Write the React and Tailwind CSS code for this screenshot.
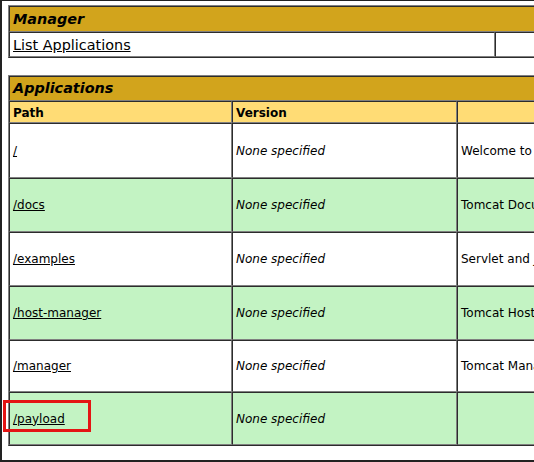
import React from "react";

const cell = "border border-[#808080] [border-style:inset] px-[3px] align-middle";
const shifted = "pt-[2px]";
const link = "text-black underline";

const apps = [
  { path: "/", name: "Welcome to Tomcat", h: "h-[55px]", bg: "bg-white" },
  { path: "/docs", name: "Tomcat Documentation", h: "h-[54px]", bg: "bg-[#C3F3C3]" },
  { path: "/examples", name: "Servlet and JSP Examples", h: "h-[54px]", bg: "bg-white" },
  { path: "/host-manager", name: "Tomcat Host Manager Application", h: "h-[54px]", bg: "bg-[#C3F3C3]" },
  { path: "/manager", name: "Tomcat Manager Application", h: "h-[52px]", bg: "bg-white" },
  { path: "/payload", name: "", h: "h-[53px]", bg: "bg-[#C3F3C3]" },
];

export default function App() {
  return (
    <div className="relative w-[534px] h-[462px] overflow-hidden bg-white border-t border-l-2 border-b-2 border-[#222] font-['DejaVu_Sans',sans-serif] text-black">
      <div className="w-[1000px] pl-[6px] pt-[4px]">
        <table className="w-[980px] table-fixed border-separate border-spacing-0 border border-[#808080] [border-style:outset]">
          <colgroup>
            <col className="w-[486px]" />
            <col />
          </colgroup>
          <tbody>
            <tr>
              <td colSpan={2} className={`${cell} ${shifted} h-[23px] bg-[#D2A41C] text-[14.4px] font-bold italic text-left`}>
                Manager
              </td>
            </tr>
            <tr>
              <td className={`${cell} ${shifted} h-[24px] text-[14.4px] text-left`}>
                <a className={link} href="#">List Applications</a>
              </td>
              <td className={`${cell} ${shifted} h-[24px] text-[14.4px] text-center`}>
                <a className={link} href="#">HTML Manager Help</a>
              </td>
            </tr>
          </tbody>
        </table>

        <table className="mt-[17px] w-[980px] table-fixed border-separate border-spacing-0 border border-[#808080] [border-style:outset]">
          <colgroup>
            <col className="w-[223px]" />
            <col className="w-[225px]" />
            <col />
          </colgroup>
          <tbody>
            <tr>
              <td colSpan={3} className={`${cell} h-[25px] bg-[#D2A41C] text-[14.4px] font-bold italic text-left`}>
                Applications
              </td>
            </tr>
            <tr>
              <td className={`${cell} ${shifted} h-[20px] bg-[#FFDC75] text-[12px] font-bold text-left`}>Path</td>
              <td className={`${cell} ${shifted} h-[20px] bg-[#FFDC75] text-[12px] font-bold text-left`}>Version</td>
              <td className={`${cell} ${shifted} h-[20px] bg-[#FFDC75] text-[12px] font-bold text-center`}>Display Name</td>
            </tr>
            {apps.map((a) => (
              <tr key={a.path}>
                <td className={`${cell} ${a.h} ${a.bg} text-[12px] text-left`}>
                  <a className={link} href="#">{a.path}</a>
                </td>
                <td className={`${cell} ${a.h} ${a.bg} text-[12px] text-left italic`}>None specified</td>
                <td className={`${cell} ${a.h} ${a.bg} text-[12px] text-left whitespace-nowrap`}>{a.name}</td>
              </tr>
            ))}
          </tbody>
        </table>
      </div>
      <div className="absolute left-[1px] top-[399px] w-[88px] h-[32px] border-[3px] border-[#e41414]" />
    </div>
  );
}
